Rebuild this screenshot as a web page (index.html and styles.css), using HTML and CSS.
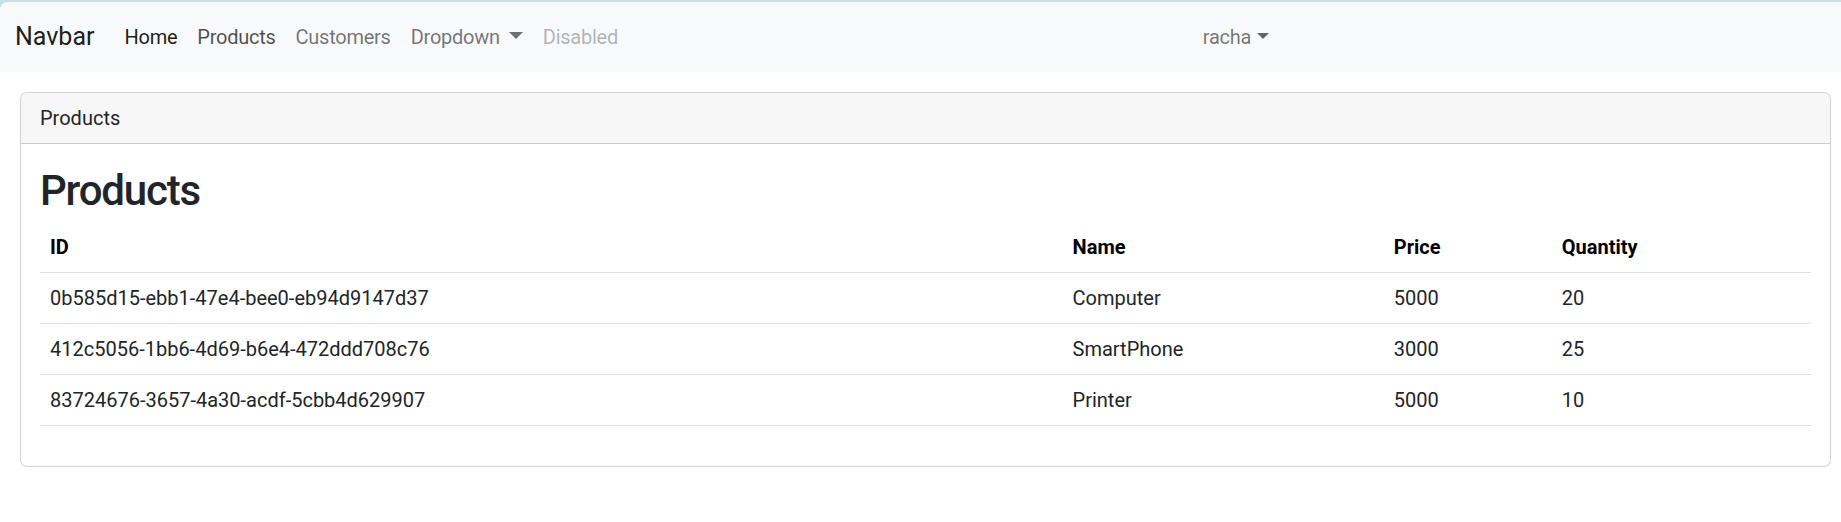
FILE: index.html
```html
<!DOCTYPE html>
<html lang="en">
<head>
<meta charset="utf-8">
<title>Products</title>
<link rel="stylesheet" href="styles.css">
</head>
<body>
<header class="top-frame">
  <nav class="navbar">
    <a class="brand" href="#">Navbar</a>
    <ul class="nav-list">
      <li><a class="nav-link active" href="#">Home</a></li>
      <li><a class="nav-link focus" href="#">Products</a></li>
      <li><a class="nav-link" href="#">Customers</a></li>
      <li><a class="nav-link toggle" href="#">Dropdown</a></li>
      <li><a class="nav-link disabled" href="#">Disabled</a></li>
    </ul>
    <ul class="nav-list user">
      <li><a class="nav-link toggle tight" href="#">racha</a></li>
    </ul>
  </nav>
</header>
<main class="page">
  <section class="card">
    <div class="card-header">Products</div>
    <div class="card-body">
      <h1 class="title">Products</h1>
      <table class="table">
        <colgroup>
          <col class="c-id"><col class="c-name"><col class="c-price"><col class="c-qty">
        </colgroup>
        <thead>
          <tr><th>ID</th><th>Name</th><th>Price</th><th>Quantity</th></tr>
        </thead>
        <tbody>
          <tr><td>0b585d15-ebb1-47e4-bee0-eb94d9147d37</td><td>Computer</td><td>5000</td><td>20</td></tr>
          <tr><td>412c5056-1bb6-4d69-b6e4-472ddd708c76</td><td>SmartPhone</td><td>3000</td><td>25</td></tr>
          <tr><td>83724676-3657-4a30-acdf-5cbb4d629907</td><td>Printer</td><td>5000</td><td>10</td></tr>
        </tbody>
      </table>
    </div>
  </section>
</main>
</body>
</html>
```

FILE: styles.css
```css
* { box-sizing: border-box; }
html, body { margin: 0; padding: 0; }
body {
  font-family: Roboto, "Liberation Sans", Arial, sans-serif;
  font-size: 20px;
  line-height: 1.5;
  color: #212529;
  background: #fff;
}
a { text-decoration: none; }

.top-frame {
  background: #c9e0e7;
  padding-top: 2px;
}
.navbar {
  display: flex;
  align-items: center;
  height: 70px;
  padding: 0 15px;
  background: #f8f9fa;
  border-top-left-radius: 8px;
}
.brand {
  font-size: 25px;
  line-height: 37.5px;
  color: rgba(0,0,0,.9);
  margin-right: 20px;
}
.nav-list {
  display: flex;
  list-style: none;
  margin: 0;
  padding: 0;
}
.nav-list.user { margin: 0 auto; padding-left: 18px; }
.nav-link {
  display: block;
  padding: 10px;
  color: rgba(0,0,0,.55);
  letter-spacing: -0.25px;
}
.nav-link.active { color: rgba(0,0,0,.9); }
.nav-link.focus { color: rgba(0,0,0,.7); }
.nav-link.disabled { color: rgba(0,0,0,.3); }
.nav-link.toggle::after {
  content: "";
  display: inline-block;
  margin-left: 9px;
  vertical-align: 5px;
  border-top: 7px solid;
  border-left: 7.5px solid transparent;
  border-right: 7.5px solid transparent;
}
.nav-link.toggle.tight::after {
  margin-left: 6px;
  border-top: 6px solid rgba(0,0,0,.6);
  border-left-width: 6px;
  border-right-width: 6px;
}

.page {
  padding: 20px 10px 0 20px;
}
.card {
  border: 1px solid rgba(0,0,0,.175);
  border-radius: 7px;
  background: #fff;
}
.card-header {
  padding: 10px 19px;
  background: rgba(0,0,0,.03);
  border-bottom: 1px solid rgba(0,0,0,.175);
  border-radius: 7px 7px 0 0;
}
.card-body {
  padding: 19px 19px 20px;
}
.title {
  margin: 0 0 3px;
  font-size: 42px;
  font-weight: 500;
  line-height: 56px;
  letter-spacing: -1.2px;
}
.table {
  width: 100%;
  table-layout: fixed;
  border-collapse: collapse;
  margin-bottom: 20px;
}
.c-id { width: 1022px; }
.c-name { width: 321px; }
.c-price { width: 168px; }
.c-qty { width: 259px; }
.table th, .table td {
  padding: 10px;
  text-align: left;
  border-bottom: 1px solid #dee2e6;
  white-space: nowrap;
}
.table th { font-weight: 700; color: #000; }
```
